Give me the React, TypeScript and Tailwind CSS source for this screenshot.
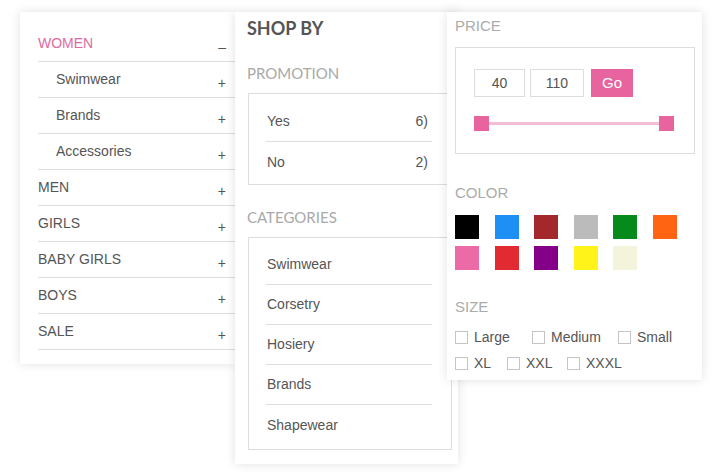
import React from "react"

const sans = "font-['Liberation_Sans',Arial,sans-serif]"
const lato = "font-['Lato','Liberation_Sans',sans-serif]"

const menu = [
  { label: "WOMEN", open: true },
  { label: "Swimwear", sub: true },
  { label: "Brands", sub: true },
  { label: "Accessories", sub: true },
  { label: "MEN" },
  { label: "GIRLS" },
  { label: "BABY GIRLS" },
  { label: "BOYS" },
  { label: "SALE" },
]

const promotions = [
  { label: "Yes", count: "6)" },
  { label: "No", count: "2)" },
]

const categories = ["Swimwear", "Corsetry", "Hosiery", "Brands", "Shapewear"]

const swatches = [
  "bg-[#000000]",
  "bg-[#1e90f5]",
  "bg-[#a4282b]",
  "bg-[#bbbbbb]",
  "bg-[#078a1c]",
  "bg-[#ff6413]",
  "bg-[#ec6aa5]",
  "bg-[#e12a32]",
  "bg-[#850088]",
  "bg-[#fff319]",
  "bg-[#f4f3dc]",
]

function CategoryMenu() {
  return (
    <div className={`relative z-[1] w-[215px] bg-white pt-[14px] pb-[14px] shadow-[0_0_10px_rgba(0,0,0,0.12)] ${sans}`}>
      {menu.map((item) => (
        <div
          key={item.label}
          className="ml-[18px] flex h-[36px] items-center justify-between border-b border-[#dddddd] pr-[9px] text-[14px]"
        >
          <span className={`${item.sub ? "pl-[18px]" : ""} ${item.open ? "text-[#de6aa3]" : "text-[#555555]"}`}>
            {item.label}
          </span>
          <span className="pt-[8px] text-[14px] text-[#555555]">{item.open ? "–" : "+"}</span>
        </div>
      ))}
    </div>
  )
}

function ShopBy() {
  return (
    <div className="relative z-[2] w-[223px] bg-white pt-[4px] pr-[6px] pb-[14px] pl-[12px] shadow-[0_0_10px_rgba(0,0,0,0.12)]">
      <h2 className={`text-[18px] leading-[24px] font-bold text-[#555555] ${lato}`}>SHOP BY</h2>

      <h3 className={`mt-[23px] text-[15px] leading-[20px] text-[#a9a9a9] ${lato}`}>PROMOTION</h3>
      <div className={`mt-[10px] ml-[1px] w-[204px] border border-[#dddddd] pt-[8px] pb-[2px] ${sans}`}>
        {promotions.map((p, i) => (
          <div
            key={p.label}
            className={`mr-[19px] ml-[17px] flex h-[40px] items-center justify-between pr-[4px] pl-[1px] text-[14px] text-[#555555] ${
              i < promotions.length - 1 ? "border-b border-[#dddddd]" : ""
            }`}
          >
            <span>{p.label}</span>
            <span>{p.count}</span>
          </div>
        ))}
      </div>

      <h3 className={`mt-[22px] text-[15px] leading-[20px] text-[#a9a9a9] ${lato}`}>CATEGORIES</h3>
      <div className={`mt-[10px] ml-[1px] w-[204px] border border-[#dddddd] pt-[7px] pb-[4px] ${sans}`}>
        {categories.map((c, i) => (
          <div
            key={c}
            className={`mr-[19px] ml-[17px] flex h-[40px] items-center pl-[1px] text-[14px] text-[#555555] ${
              i < categories.length - 1 ? "border-b border-[#dddddd]" : ""
            }`}
          >
            {c}
          </div>
        ))}
      </div>
    </div>
  )
}

function Checkbox({ label, width }: { label: string; width: string }) {
  return (
    <label className={`flex items-center ${width}`}>
      <span className="h-[13px] w-[13px] border border-[#c4c4c4] bg-white" />
      <span className="ml-[6px] text-[14px] text-[#555555]">{label}</span>
    </label>
  )
}

function Filters() {
  return (
    <div
      className={`relative z-[3] -ml-[11px] w-[255px] bg-white pt-[4px] pr-[7px] pb-[4px] pl-[8px] shadow-[0_0_10px_rgba(0,0,0,0.12)] ${sans}`}
    >
      <h3 className="text-[15px] leading-[20px] text-[#ababab]">PRICE</h3>
      <div className="mt-[11px] w-[240px] border border-[#dddddd] pt-[21px] pr-[20px] pb-[22px] pl-[18px]">
        <div className="flex">
          <div className="flex h-[28px] w-[51px] items-center justify-center border border-[#dddddd] text-[14px] text-[#555555]">
            40
          </div>
          <div className="ml-[5px] flex h-[28px] w-[54px] items-center justify-center border border-[#dddddd] text-[14px] text-[#555555]">
            110
          </div>
          <button className="ml-[7px] flex h-[28px] w-[42px] items-center justify-center bg-[#e7649f] text-[15px] text-white">
            Go
          </button>
        </div>
        <div className="mt-[19px] flex w-[200px] items-center">
          <span className="h-[15px] w-[15px] bg-[#e7649f]" />
          <span className="h-[3px] flex-1 bg-[#f3bdd5]" />
          <span className="h-[15px] w-[15px] bg-[#e7649f]" />
        </div>
      </div>

      <h3 className="mt-[29px] text-[15px] leading-[20px] text-[#ababab]">COLOR</h3>
      <div className="mt-[12px] flex w-[240px] flex-wrap gap-x-[15.6px] gap-y-[7px]">
        {swatches.map((s) => (
          <span key={s} className={`h-[24px] w-[24px] ${s}`} />
        ))}
      </div>

      <h3 className="mt-[27px] text-[15px] leading-[20px] text-[#ababab]">SIZE</h3>
      <div className="mt-[7px]">
        <div className="flex h-[26px] items-center">
          <Checkbox label="Large" width="w-[77px]" />
          <Checkbox label="Medium" width="w-[86px]" />
          <Checkbox label="Small" width="w-auto" />
        </div>
        <div className="flex h-[26px] items-center">
          <Checkbox label="XL" width="w-[52px]" />
          <Checkbox label="XXL" width="w-[60px]" />
          <Checkbox label="XXXL" width="w-auto" />
        </div>
      </div>
    </div>
  )
}

export default function App() {
  return (
    <div className="flex h-[476px] w-[726px] items-start bg-white pt-[12px] pl-[20px]">
      <CategoryMenu />
      <ShopBy />
      <Filters />
    </div>
  )
}
